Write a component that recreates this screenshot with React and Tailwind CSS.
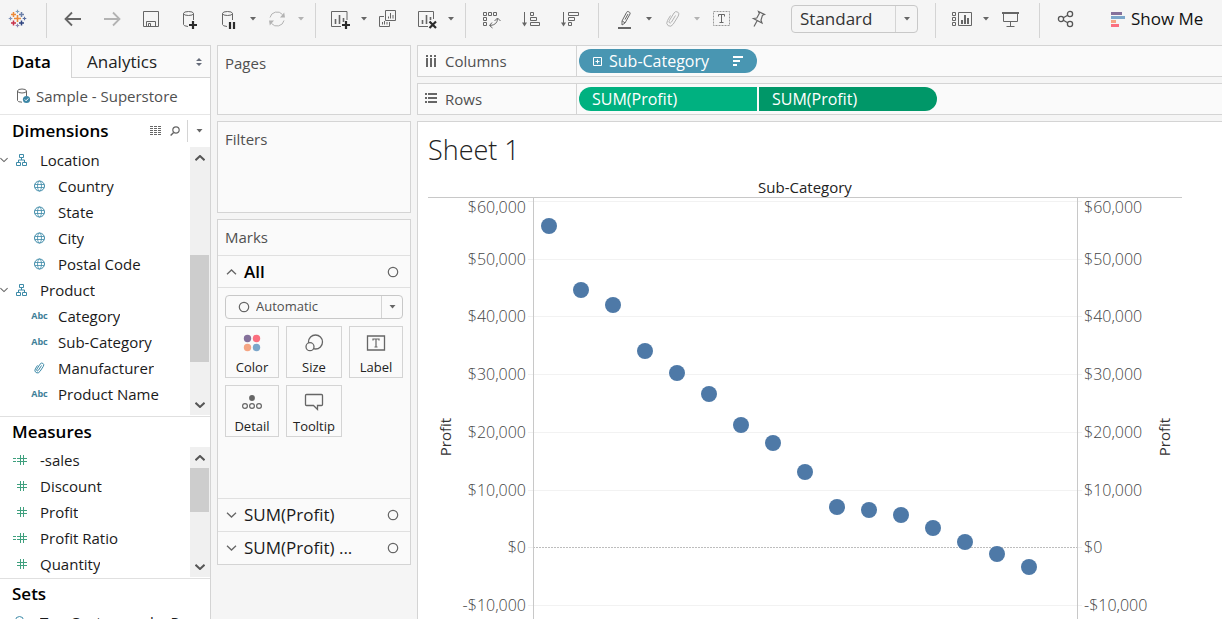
import React, { useState } from 'react'
import clsx from 'clsx'

const dimensions = [
  { name: 'Location', icon: 'hierarchy', open: true },
  { name: 'Country', icon: 'globe', child: true },
  { name: 'State', icon: 'globe', child: true },
  { name: 'City', icon: 'globe', child: true },
  { name: 'Postal Code', icon: 'globe', child: true },
  { name: 'Product', icon: 'hierarchy', open: true },
  { name: 'Category', icon: 'abc', child: true },
  { name: 'Sub-Category', icon: 'abc', child: true },
  { name: 'Manufacturer', icon: 'clip', child: true },
  { name: 'Product Name', icon: 'abc', child: true },
]

const measures = [
  { name: '-sales', icon: 'calc' },
  { name: 'Discount', icon: 'number' },
  { name: 'Profit', icon: 'number' },
  { name: 'Profit Ratio', icon: 'calc' },
  { name: 'Quantity', icon: 'number' },
]

const sets = [{ name: 'Top Customers by Profit', icon: 'set' }]

// y values are pixels below the top of the plot
const ticks = [
  { label: '$60,000', y: 3, textY: 15 },
  { label: '$50,000', y: 61, textY: 67 },
  { label: '$40,000', y: 118, textY: 124 },
  { label: '$30,000', y: 176, textY: 182 },
  { label: '$20,000', y: 234, textY: 240 },
  { label: '$10,000', y: 292, textY: 298 },
  { label: '$0', y: 349, textY: 355 },
  { label: '-$10,000', y: 407, textY: 413 },
]

const points = [28, 92, 107, 153, 175, 196, 227, 245, 274, 309, 312, 317, 330, 344, 356, 369]
const categoryCount = 17

const Icon = ({ children, w = 20, h = 20, color = '#666' }) => (
  <svg width={w} height={h} viewBox={`0 0 ${w} ${h}`} fill="none" stroke={color} className="shrink-0" aria-hidden="true">
    {children}
  </svg>
)

const Plus = ({ x, y, r, color, width = 1.5 }) => (
  <path d={`M${x - r} ${y}H${x + r}M${x} ${y - r}V${y + r}`} stroke={color} strokeWidth={width} />
)

const Logo = () => (
  <Icon>
    <Plus x={9.5} y={9.5} r={3.5} color="#eb8a3a" width={1.6} />
    <Plus x={5.5} y={5.5} r={2.5} color="#eb8a3a" />
    <Plus x={13.5} y={5.5} r={2.5} color="#6b7fa8" />
    <Plus x={5.5} y={14} r={2.5} color="#c8324a" />
    <Plus x={13.5} y={14} r={2.5} color="#2f4480" />
    <Plus x={9.5} y={2.5} r={1.8} color="#7fa0bd" width={1.2} />
    <Plus x={9.5} y={16.5} r={1.8} color="#8a86b0" width={1.2} />
    <Plus x={2.5} y={9.5} r={1.8} color="#7f92b8" width={1.2} />
    <Plus x={16.5} y={9.5} r={1.8} color="#5b6fa0" width={1.2} />
  </Icon>
)

const Cylinder = () => (
  <>
    <ellipse cx="8.5" cy="4.5" rx="5" ry="2" />
    <path d="M3.5 4.5V15.5Q3.5 17 8 17.5M13.5 4.5V11" />
  </>
)

const toolIcons = {
  back: (
    <Icon>
      <path d="M18 10H3M9 3.5L2.5 10L9 16.5" strokeWidth="1.8" />
    </Icon>
  ),
  forward: (
    <Icon color="#b3b3b3">
      <path d="M2 10H17M11 3.5L17.5 10L11 16.5" strokeWidth="1.8" />
    </Icon>
  ),
  save: (
    <Icon>
      <path d="M2.5 2.5H17.5V17.5H2.5ZM5.5 17V12.5H14.5V17M7.5 17V14.5H9.5V17" />
    </Icon>
  ),
  addData: (
    <Icon>
      <Cylinder />
      <Plus x={13} y={16} r={4} color="#2b2b2b" width={2.2} />
    </Icon>
  ),
  pauseData: (
    <Icon>
      <Cylinder />
      <path d="M11 13V20M15 13V20" stroke="#2b2b2b" strokeWidth="2.2" />
    </Icon>
  ),
  refresh: (
    <Icon color="#b3b3b3">
      <path d="M3 8.5A7.2 7.2 0 0 1 15.5 5.5M17 11.5A7.2 7.2 0 0 1 4.5 14.5" />
      <path d="M13 8.5L18 8.5L17.2 3.5ZM7 11.5L2 11.5L2.8 16.5Z" fill="#b3b3b3" stroke="none" />
    </Icon>
  ),
  newSheet: (
    <Icon>
      <path d="M11 17.5H1.5V2.5H17V11" />
      <path d="M5.5 15V10M9.5 15V6M13.5 13V9" strokeWidth="1.6" />
      <Plus x={16} y={16} r={4} color="#2b2b2b" width={2.2} />
    </Icon>
  ),
  duplicate: (
    <Icon>
      <path d="M7.5 1.5H17.5V11.5H7.5ZM6 7.5H1.5V17.5H11.5V13" />
      <path d="M10.5 9.5V7.5M12.5 9.5V4M15 9.5V6M4.5 15.5V13M6.5 15.5V12M9 15.5V13" />
    </Icon>
  ),
  clear: (
    <Icon>
      <path d="M11 17.5H1.5V2.5H16.5V10" />
      <path d="M5.5 15V11M9.5 15V6M13.5 11V8" strokeWidth="1.6" />
      <path d="M12.5 12.5L19 19M19 12.5L12.5 19" stroke="#2b2b2b" strokeWidth="2.2" />
    </Icon>
  ),
  swap: (
    <Icon>
      <path d="M1.5 3.5H4.5V6.5H1.5ZM6.5 3.5H9.5V6.5H6.5ZM11.5 3.5H14.5V6.5H11.5ZM1.5 8.5H4.5V11.5H1.5ZM1.5 13.5H4.5V16.5H1.5Z" />
      <path d="M8 16.5Q15.5 16 15.5 9.5M10 13.5L7.5 16.5L10.5 19M12.5 12L15.5 9L18.5 12" />
    </Icon>
  ),
  sortAsc: (
    <Icon>
      <path d="M3.5 3V16M9.5 3.5H12.5V6.5H9.5ZM9.5 8.5H15.5V11.5H9.5ZM9.5 13.5H18.5V16.5H9.5Z" />
      <path d="M1 13.5H6L3.5 17.5Z" fill="#666" stroke="none" />
    </Icon>
  ),
  sortDesc: (
    <Icon>
      <path d="M3.5 3V16M8.5 3.5H18.5V6.5H8.5ZM8.5 8.5H14.5V11.5H8.5ZM8.5 13.5H11.5V16.5H8.5Z" />
      <path d="M1 13.5H6L3.5 17.5Z" fill="#666" stroke="none" />
    </Icon>
  ),
  highlight: (
    <Icon>
      <path d="M11.5 3.5Q12 2.2 13.2 2.6L14.5 3.2Q15.5 3.8 15 5L10 14L7 16V12Z M7.2 12L10 13.8 M13 5L10 10.5" />
      <path d="M3 19H16" strokeWidth="2" />
    </Icon>
  ),
  attach: (
    <Icon color="#b3b3b3">
      <path d="M12.5 6.5L8.5 13Q7.5 14.5 6.5 13.8Q5.5 13 6.3 11.7L11 4Q12.5 1.7 14.7 3Q16.8 4.5 15.3 7L10.2 15.2Q8 18.5 5.2 16.7Q2.6 14.8 4.5 11.5L7.5 6.5" />
    </Icon>
  ),
  text: (
    <Icon>
      <rect x="2.5" y="2.5" width="16" height="14" stroke="#999" strokeDasharray="2 1" />
      <path d="M7.5 7.5V5.5H13.5V7.5M10.5 5.5V13.5M8.5 13.5H12.5" />
    </Icon>
  ),
  pin: (
    <Icon>
      <path d="M9.5 2.5L15.5 5.5L13.5 6.2L12 11.2L13 14L4.5 9.5L7.8 9L10.3 4.5ZM8 12L5 17.5" strokeWidth="1.2" />
    </Icon>
  ),
  cards: (
    <Icon>
      <path d="M.5 3.5H3.5V6.5H.5ZM.5 8.5H3.5V11.5H.5ZM.5 13.5H3.5V16.5H.5ZM6.5 3.5H19.5V16.5H6.5Z" />
      <path d="M10 15V11M13 15V6M16 15V9" strokeWidth="2" />
    </Icon>
  ),
  present: (
    <Icon>
      <path d="M2 4H19" strokeWidth="2" />
      <path d="M3.5 4.5V12.5H17.5V4.5M10.5 12.5V17M6.5 17.5H14.5" />
    </Icon>
  ),
  share: (
    <Icon color="#555">
      <circle cx="5" cy="10" r="2.6" strokeWidth="1.3" />
      <circle cx="14" cy="5" r="2.6" strokeWidth="1.3" />
      <circle cx="14" cy="15" r="2.6" strokeWidth="1.3" />
      <path d="M7.3 8.7L11.7 6.3M7.3 11.3L11.7 13.7" strokeWidth="1.3" />
    </Icon>
  ),
}

const Caret = ({ color = '#666', w = 6 }) => (
  <svg width={w} height="4" viewBox="0 0 6 4" fill={color} aria-hidden="true">
    <path d="M0 0H6L3 3.6Z" />
  </svg>
)

const Chevron = ({ up = false, w = 10, stroke = 1.3, color = '#666' }) => (
  <svg width={w} height="6" viewBox="0 0 10 6" fill="none" stroke={color} strokeWidth={stroke} className="shrink-0" aria-hidden="true">
    <path d={up ? 'M.5 5.2L5 1L9.5 5.2' : 'M.5 .8L5 5L9.5 .8'} />
  </svg>
)

const Ring = () => (
  <svg width="12" height="12" viewBox="0 0 12 12" fill="none" stroke="#666" strokeWidth="1.2" className="shrink-0" aria-hidden="true">
    <circle cx="6" cy="6" r="4.7" />
  </svg>
)

const Tool = ({ icon, label, menu = false, muted = false }) => (
  <div className="flex items-center">
    <button type="button" aria-label={label} className="size-5">
      {toolIcons[icon]}
    </button>
    {menu && (
      <button type="button" aria-label={`${label} options`} className="flex h-5 w-7 items-center justify-center">
        <Caret color={muted ? '#b3b3b3' : '#666'} />
      </button>
    )}
  </div>
)

const Divider = () => <div className="h-[35px] w-px shrink-0 self-end bg-[#d4d4d4]" />

const Toolbar = () => (
  <header className="flex h-[38px] shrink-0 items-center">
    <a href="#start" aria-label="Start page" className="ml-2 mr-[18px]">
      <Logo />
    </a>
    <Divider />
    <div className="flex gap-[19px] pl-4">
      <Tool icon="back" label="Undo" />
      <Tool icon="forward" label="Redo" />
      <Tool icon="save" label="Save" />
      <Tool icon="addData" label="New data source" />
      <div className="flex">
        <Tool icon="pauseData" label="Pause auto updates" menu />
        <Tool icon="refresh" label="Run update" menu muted />
      </div>
    </div>
    <Divider />
    <div className="flex pl-[14px]">
      <Tool icon="newSheet" label="New worksheet" menu />
      <div className="flex gap-[19px]">
        <Tool icon="duplicate" label="Duplicate" />
        <Tool icon="clear" label="Clear sheet" menu />
      </div>
    </div>
    <Divider />
    <div className="flex gap-[19px] pl-4 pr-[18px]">
      <Tool icon="swap" label="Swap rows and columns" />
      <Tool icon="sortAsc" label="Sort ascending" />
      <Tool icon="sortDesc" label="Sort descending" />
    </div>
    <Divider />
    <div className="flex pl-4">
      <Tool icon="highlight" label="Highlight" menu />
      <Tool icon="attach" label="Group members" menu muted />
      <div className="flex gap-[18px]">
        <Tool icon="text" label="Show mark labels" />
        <Tool icon="pin" label="Fix axes" />
      </div>
    </div>
    <div className="ml-[22px] mr-[17px] grid w-[127px] grid-cols-[1fr_23px] items-center">
      <select
        aria-label="Fit"
        defaultValue="Standard"
        className="col-span-2 col-start-1 row-start-1 h-7 appearance-none rounded-sm border border-[#c8c8c8] bg-[#f5f5f5] pl-2 text-[17px] leading-6 text-[#333]"
      >
        <option>Standard</option>
        <option>Fit Width</option>
        <option>Fit Height</option>
        <option>Entire View</option>
      </select>
      <span className="pointer-events-none col-start-2 row-start-1 flex h-[26px] items-center justify-center border-l border-[#d4d4d4]">
        <Caret w={8} />
      </span>
    </div>
    <Divider />
    <div className="flex pl-4 pr-[19px]">
      <Tool icon="cards" label="Show cards" menu />
      <Tool icon="present" label="Presentation mode" />
    </div>
    <Divider />
    <div className="flex gap-[35px] pl-4">
      <Tool icon="share" label="Share" />
      <button type="button" className="flex items-center gap-[6px] whitespace-nowrap text-[17px] leading-5 text-[#111]">
        <svg width="14" height="15" viewBox="0 0 14 15" aria-hidden="true">
          <path d="M0 0H11V3H0Z" fill="#85719b" />
          <path d="M0 4H14V7H0Z" fill="#7ba6ca" />
          <path d="M0 8H5V11H0Z" fill="#f5a583" />
          <path d="M0 12H8V15H0Z" fill="#fb6f7f" />
        </svg>
        Show Me
      </button>
    </div>
  </header>
)

const ClipPath = () => (
  <path d="M13.5 4.5L10.5 9.2Q9.7 10.3 9 9.8Q8.2 9.2 8.9 8.1L12 3.2Q13.3 1.4 14.9 2.4Q16.5 3.5 15.3 5.4L12 10.4Q10.3 12.9 8.1 11.6Q6 10.1 7.3 7.9L9.5 4.4" />
)

// every field icon is drawn on a 23px wide column so that names line up
const FieldIcon = ({ type }) => {
  if (type === 'abc') {
    return <span className="w-[23px] text-center text-[9px] font-bold text-[#3f7f99]">Abc</span>
  }
  if (type === 'globe') {
    return (
      <Icon w={23} h={14} color="#3d8aa8">
        <circle cx="11.5" cy="7" r="5" />
        <path d="M7 5.5H16M7 8.5H16" strokeWidth=".8" />
        <ellipse cx="11.5" cy="7" rx="2" ry="5" strokeWidth=".8" />
      </Icon>
    )
  }
  if (type === 'hierarchy') {
    return (
      <Icon w={23} h={14} color="#3d8aa8">
        <path d="M9.5 1.5H13.5V4.5H9.5ZM6.5 9.5H10.5V12.5H6.5ZM12.5 9.5H16.5V12.5H12.5ZM11.5 4.5V7M8.5 9.5V7H14.5V9.5" />
      </Icon>
    )
  }
  if (type === 'clip') {
    return (
      <Icon w={23} h={14} color="#3d8aa8">
        <ClipPath />
      </Icon>
    )
  }
  if (type === 'set') {
    return (
      <Icon w={23} h={14} color="#3d8aa8">
        <circle cx="9.5" cy="5.5" r="4" />
        <circle cx="12.5" cy="9" r="4" />
      </Icon>
    )
  }
  return (
    <Icon w={23} h={14} color="#3fa07e">
      <path d="M7 5.5H17M7 8.5H17M10.5 2V12M13.5 2V12" />
      {type === 'calc' && <path d="M3 5.5H6M3 8.5H6" />}
    </Icon>
  )
}

const Field = ({ field }) => (
  <li className={clsx('flex h-[26px] items-center', field.child && 'pl-[18px]')}>
    <span className="flex w-2.5 shrink-0 items-center">{field.open && <Chevron w={8} />}</span>
    <FieldIcon type={field.icon} />
    <span className="ml-[7px] truncate text-[15px] leading-[26px] text-[#1a1a1a]">{field.name}</span>
  </li>
)

const Scrollbar = ({ label, children }) => (
  <div className="flex w-5 shrink-0 flex-col bg-[#f0f0f0]">
    <button type="button" aria-label={`Scroll ${label} up`} className="flex h-[21px] items-center justify-center">
      <Chevron up stroke={2} color="#555" />
    </button>
    {children}
    <button type="button" aria-label={`Scroll ${label} down`} className="mt-auto flex h-[21px] items-center justify-center">
      <Chevron stroke={2} color="#555" />
    </button>
  </div>
)

const SectionTitle = ({ children }) => (
  <h2 className="pl-3 text-[17px] font-semibold leading-[30px] text-black">{children}</h2>
)

const DataPane = () => {
  const [tab, setTab] = useState('Data')

  return (
    <aside className="flex w-[211px] shrink-0 flex-col overflow-hidden border-r border-t border-[#d4d4d4] bg-white">
      <div className="flex h-8 shrink-0">
        <button type="button" onClick={() => setTab('Data')} aria-pressed={tab === 'Data'} className="w-[71px] pl-3 text-left text-[17px] font-semibold leading-[30px]">
          Data
        </button>
        <button
          type="button"
          onClick={() => setTab('Analytics')}
          aria-pressed={tab === 'Analytics'}
          className="flex flex-1 items-center justify-between border-b border-l border-[#d4d4d4] bg-[#fafafa] pl-[15px] pr-2 text-[17px] text-[#222]"
        >
          Analytics
          <svg width="6" height="8" viewBox="0 0 6 8" fill="#666c7a" aria-hidden="true">
            <path d="M0 3L3 0L6 3ZM0 5H6L3 8Z" />
          </svg>
        </button>
      </div>

      <a href="#superstore" className="flex h-[37px] shrink-0 items-center gap-[5px] border-b border-[#e6e6e6] pl-4 text-[15px] leading-9 text-[#505050]">
        <Icon w={15} h={16}>
          <ellipse cx="6" cy="3" rx="4.5" ry="2" />
          <path d="M1.5 3V12.5Q1.5 14 6 14.2M10.5 3V8" />
          <circle cx="10.5" cy="11.5" r="3.6" fill="#3d87a6" stroke="none" />
          <path d="M8.8 11.5L10.1 12.8L12.3 10.4" stroke="#fff" />
        </Icon>
        Sample - Superstore
      </a>

      <div className="flex h-8 shrink-0 items-center">
        <SectionTitle>Dimensions</SectionTitle>
        <button type="button" aria-label="View data" className="ml-auto">
          <Icon w={12} h={10}>
            <path d="M0 .5H12M0 2.5H12M0 4.5H12M0 6.5H12M0 8.5H12" strokeDasharray="3 1" />
          </Icon>
        </button>
        <button type="button" aria-label="Find field" className="ml-2">
          <Icon w={10} h={10}>
            <circle cx="6" cy="4" r="3.2" strokeWidth="1.2" />
            <path d="M3.6 6.4L.6 9.4" strokeWidth="1.4" />
          </Icon>
        </button>
        <button type="button" aria-label="Data pane menu" className="ml-[7px] flex h-[22px] w-[23px] items-center justify-center border-l border-[#d4d4d4]">
          <Caret w={7} />
        </button>
      </div>
      <div className="flex h-[268px] shrink-0">
        <ul className="min-w-0 flex-1 overflow-hidden">
          {dimensions.map((field) => (
            <Field key={field.name} field={field} />
          ))}
        </ul>
        <Scrollbar label="dimensions">
          <div className="mt-[87px] h-[107px] w-[19px] bg-[#cdcdcd]" />
        </Scrollbar>
      </div>

      <div className="mt-px shrink-0 border-t border-[#e0e0e0]">
        <SectionTitle>Measures</SectionTitle>
      </div>
      <div className="flex h-[130px] shrink-0">
        <ul className="min-w-0 flex-1 overflow-hidden">
          {measures.map((field) => (
            <Field key={field.name} field={field} />
          ))}
        </ul>
        <Scrollbar label="measures">
          <div className="h-11 w-[19px] bg-[#cdcdcd]" />
        </Scrollbar>
      </div>

      <div className="mt-px shrink-0 border-t border-[#e0e0e0]">
        <SectionTitle>Sets</SectionTitle>
        <ul className="pr-3">
          {sets.map((field) => (
            <Field key={field.name} field={field} />
          ))}
        </ul>
      </div>
    </aside>
  )
}

const markIcons = {
  Color: (
    <Icon w={24}>
      <g stroke="none">
        <circle cx="7.5" cy="5.5" r="3.7" fill="#85719b" />
        <circle cx="16.5" cy="5.5" r="3.7" fill="#fb6f7f" />
        <circle cx="7.5" cy="14.5" r="3.7" fill="#f5a583" />
        <circle cx="16.5" cy="14.5" r="3.7" fill="#7ba6ca" />
      </g>
    </Icon>
  ),
  Size: (
    <Icon w={24}>
      <circle cx="13.5" cy="9" r="7" strokeWidth="1.3" />
      <circle cx="8" cy="13.7" r="4" fill="#fafafa" strokeWidth="1.3" />
    </Icon>
  ),
  Label: (
    <Icon w={24}>
      <path d="M3.5 3H20.5V17H3.5Z" strokeWidth="1.3" />
      <path d="M9 7.5V6H15V7.5M12 6V14M10.5 14H13.5" strokeWidth="1.2" />
    </Icon>
  ),
  Detail: (
    <Icon w={24}>
      <circle cx="12" cy="6" r="2.9" fill="#666" stroke="none" />
      <circle cx="5" cy="14" r="2.4" strokeWidth="1.2" />
      <circle cx="12" cy="14" r="2.4" strokeWidth="1.2" />
      <circle cx="19" cy="14" r="2.4" strokeWidth="1.2" />
    </Icon>
  ),
  Tooltip: (
    <Icon w={24}>
      <path d="M4.5 2.5H19.5Q20.5 2.5 20.5 3.5V12.5Q20.5 13.5 19.5 13.5H15.5V17.5L11.5 13.5H4.5Q3.5 13.5 3.5 12.5V3.5Q3.5 2.5 4.5 2.5Z" strokeWidth="1.3" />
    </Icon>
  ),
}

const MeasureMarks = ({ children }) => (
  <button type="button" className="flex h-[33px] w-full items-center border-t border-[#e0e0e0] pl-2 pr-[11px] text-[17px] leading-[30px] text-[#1a1a1a]">
    <Chevron w={11} />
    <span className="ml-[7px] mr-auto">{children}</span>
    <Ring />
  </button>
)

const Cards = () => (
  <div className="flex w-[206px] shrink-0 flex-col gap-[6px] px-[6px] text-[15px] text-[#505050]">
    <section className="h-[70px] border border-[#d4d4d4] bg-[#fafafa] px-[7px] leading-[34px]">Pages</section>
    <section className="h-[92px] border border-[#d4d4d4] bg-[#fafafa] px-[7px] leading-[34px]">Filters</section>
    <section className="border border-[#d4d4d4] bg-[#fafafa]">
      <h2 className="h-9 border-b border-[#e0e0e0] px-[7px] leading-[34px]">Marks</h2>
      <button type="button" className="flex h-8 w-full items-center border-b border-[#e0e0e0] pl-2 pr-[11px] text-[17px] font-semibold leading-[30px] text-black">
        <Chevron up w={11} />
        <span className="ml-[7px] mr-auto">All</span>
        <Ring />
      </button>
      <div className="h-[210px] p-[7px]">
        <div className="grid grid-cols-[1fr_22px] items-center">
          <select
            aria-label="Mark type"
            defaultValue="Automatic"
            className="col-span-2 col-start-1 row-start-1 h-6 appearance-none rounded-sm border border-[#c8c8c8] bg-[#fafafa] pl-[30px] text-[13px] text-[#505050]"
          >
            <option>Automatic</option>
            <option>Bar</option>
            <option>Line</option>
            <option>Circle</option>
          </select>
          <span className="pointer-events-none col-start-1 row-start-1 ml-[13px]">
            <Ring />
          </span>
          <span className="pointer-events-none col-start-2 row-start-1 flex h-[22px] items-center justify-center border-l border-[#d4d4d4]">
            <Caret w={7} />
          </span>
        </div>
        <div className="mt-[7px] grid grid-cols-[54px_56px_54px] gap-[7px] text-[13px] leading-5 text-[#222]">
          {Object.keys(markIcons).map((name) => (
            <button key={name} type="button" className="flex h-[52px] flex-col items-center justify-end gap-1 border border-[#d4d4d4]">
              {markIcons[name]}
              {name}
            </button>
          ))}
        </div>
      </div>
      <MeasureMarks>SUM(Profit)</MeasureMarks>
      <MeasureMarks>SUM(Profit) ...</MeasureMarks>
    </section>
  </div>
)

const Shelf = ({ label, icon, children }) => (
  <div className="flex h-8 shrink-0 border border-r-0 border-[#d4d4d4] bg-[#fafafa]">
    <div className="flex w-[159px] items-center gap-2 border-r border-[#d4d4d4] pl-[7px] text-[15px] text-[#505050]">
      {icon}
      {label}
    </div>
    <div className="flex items-center gap-0.5 pl-0.5 text-[16px] leading-6 text-white">{children}</div>
  </div>
)

const Shelves = () => (
  <>
    <Shelf
      label="Columns"
      icon={
        <Icon w={12} h={12}>
          <path d="M2 0V2M6 0V2M10 0V2M2 3V12M6 3V12M10 3V12" strokeWidth="2" />
        </Icon>
      }
    >
      <button type="button" className="flex h-6 w-[178px] items-center rounded-full bg-[#4996b2] pl-[14px] pr-[14px]">
        <Icon w={9} h={9} color="#fff">
          <path d="M.5 .5H8.5V8.5H.5ZM2.5 4.5H6.5M4.5 2.5V6.5" />
        </Icon>
        <span className="ml-[7px] mr-auto">Sub-Category</span>
        <Icon w={10} h={10} color="#fff">
          <path d="M0 1H10M0 5H7M0 9H4" strokeWidth="2" />
        </Icon>
      </button>
    </Shelf>
    <Shelf
      label="Rows"
      icon={
        <Icon w={12} h={12}>
          <path d="M0 1H2M0 5H2M0 9H2M3 1H12M3 5H12M3 9H12" strokeWidth="2" />
        </Icon>
      }
    >
      <button type="button" className="h-6 w-[178px] rounded-l-full bg-[#00b180] pl-[13px] text-left">
        SUM(Profit)
      </button>
      <button type="button" className="h-6 w-[178px] rounded-r-full bg-[#009768] pl-[13px] text-left">
        SUM(Profit)
      </button>
    </Shelf>
  </>
)

const Axis = ({ side }) => {
  const left = side === 'left'

  return (
    <svg width={left ? 105 : 104} height="440" className="shrink-0 overflow-visible text-[16px] font-light" fill="#444">
      {ticks.map((tick) => (
        <React.Fragment key={tick.label}>
          <path d={left ? `M100 ${tick.y + 0.5}H105` : `M0 ${tick.y + 0.5}H4`} stroke="#f0f0f0" />
          <text x={left ? 98 : 6} y={tick.textY} textAnchor={left ? 'end' : 'start'}>
            {tick.label}
          </text>
        </React.Fragment>
      ))}
      <text
        transform={left ? 'translate(23 239) rotate(-90)' : 'translate(92 239) rotate(-90)'}
        textAnchor="middle"
        fill="#333"
        className="text-[15px] font-normal"
      >
        Profit
      </text>
    </svg>
  )
}

const Sheet = () => (
  <section className="flex flex-1 flex-col overflow-hidden border-l border-t border-[#d4d4d4] bg-white pl-[10px] pr-10">
    <h1 className="pt-2 text-[27px] font-light leading-10 text-[#222]">Sheet 1</h1>
    <div className="mt-[7px] border-b border-[#c8c8c8] text-center text-[15px] leading-5 text-[#222]">Sub-Category</div>
    <div className="flex">
      <Axis side="left" />
      <svg height="440" className="min-w-0 flex-1 border-r border-[#c8c8c8]">
        {ticks.map((tick) => (
          <line
            key={tick.label}
            x1="0"
            x2="100%"
            y1={tick.y + 0.5}
            y2={tick.y + 0.5}
            stroke={tick.label === '$0' ? '#bdbdbd' : '#f2f2f2'}
            strokeDasharray={tick.label === '$0' ? '2 1' : undefined}
          />
        ))}
        <path d="M.5 0V440" stroke="#c8c8c8" />
        {points.map((y, i) => (
          <circle key={i} cx={`${((i + 0.5) / categoryCount) * 100}%`} cy={y} r="8" fill="#4e79a7" />
        ))}
      </svg>
      <Axis side="right" />
    </div>
  </section>
)

const App = () => (
  <div className="flex h-screen flex-col gap-[7px] overflow-hidden bg-[#f5f5f5] font-['Open_Sans',sans-serif]">
    <Toolbar />
    <div className="flex min-h-0 flex-1">
      <DataPane />
      <Cards />
      <main className="flex min-w-0 flex-1 flex-col gap-[6px]">
        <Shelves />
        <Sheet />
      </main>
    </div>
  </div>
)

export default App
